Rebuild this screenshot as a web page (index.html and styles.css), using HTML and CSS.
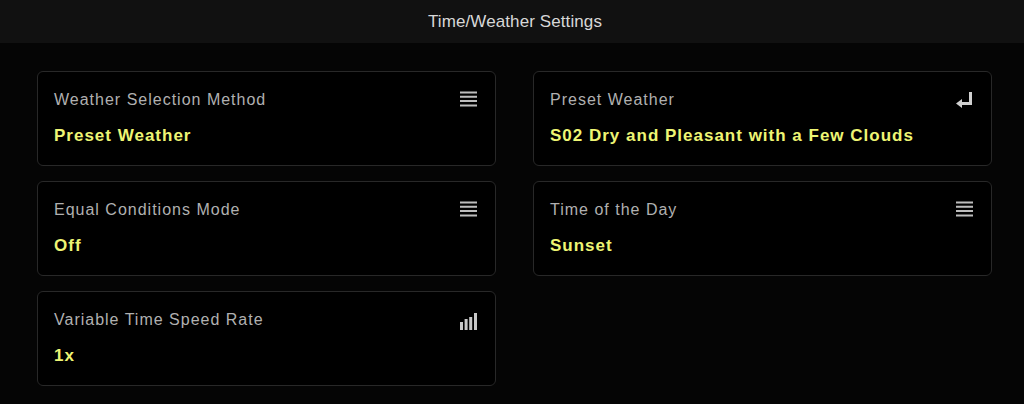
FILE: index.html
```html
<!DOCTYPE html>
<html lang="en">
<head>
  <meta charset="UTF-8" />
  <title>Time/Weather Settings</title>
  <link rel="stylesheet" href="styles.css">
</head>
<body>
  <header>
    <h1>Time/Weather Settings</h1>
  </header>

  <main class="grid">
    <div class="card">
      <div class="top">
        <p class="label">Weather Selection Method</p>
        <svg class="icon" width="17" height="16" viewBox="0 0 17 16"><path d="M0 1.5h17M0 5.8h17M0 10.1h17M0 14.4h17" stroke="#bdbdbd" stroke-width="2"/></svg>
      </div>
      <p class="value">Preset Weather</p>
    </div>

    <div class="card">
      <div class="top">
        <p class="label">Preset Weather</p>
        <svg class="icon" width="17" height="17" viewBox="0 0 17 17"><path d="M14.5 1v11.5H5" fill="none" stroke="#d0d0d0" stroke-width="3"/><path d="M0 12.5l6-4.5v9z" fill="#d0d0d0"/></svg>
      </div>
      <p class="value">S02 Dry and Pleasant with a Few Clouds</p>
    </div>

    <div class="card">
      <div class="top">
        <p class="label">Equal Conditions Mode</p>
        <svg class="icon" width="17" height="16" viewBox="0 0 17 16"><path d="M0 1.5h17M0 5.8h17M0 10.1h17M0 14.4h17" stroke="#bdbdbd" stroke-width="2"/></svg>
      </div>
      <p class="value">Off</p>
    </div>

    <div class="card">
      <div class="top">
        <p class="label">Time of the Day</p>
        <svg class="icon" width="17" height="16" viewBox="0 0 17 16"><path d="M0 1.5h17M0 5.8h17M0 10.1h17M0 14.4h17" stroke="#bdbdbd" stroke-width="2"/></svg>
      </div>
      <p class="value">Sunset</p>
    </div>

    <div class="card">
      <div class="top">
        <p class="label">Variable Time Speed Rate</p>
        <svg class="icon bars" width="17" height="17" viewBox="0 0 17 17"><path d="M0 9h3v8H0zM4.6 6h3v11h-3zM9.2 4h3v13h-3zM14 0h3v17h-3z" fill="#c8c8c8"/></svg>
      </div>
      <p class="value">1x</p>
    </div>
  </main>
</body>
</html>
```

FILE: styles.css
```css
body {
  margin: 0;
  background-color: #050505;
  font-family: "Liberation Sans", Arial, sans-serif;
  height: 404px;
  overflow: hidden;
}

header {
  height: 43px;
  background-color: #111111;
  display: flex;
  align-items: center;
  justify-content: center;
  padding-left: 6px;
}

h1 {
  margin: 0;
  font-weight: normal;
  font-size: 17px;
  letter-spacing: 0.1px;
  color: #d8d8d8;
}

.grid {
  display: grid;
  grid-template-columns: 459px 459px;
  column-gap: 37px;
  row-gap: 15px;
  padding: 28px 0 0 37px;
}

.card {
  height: 95px;
  box-sizing: border-box;
  border: 1px solid #282828;
  border-radius: 6px;
  background-color: #000;
  padding: 19px 18px 0 16px;
}

.top {
  display: flex;
  justify-content: space-between;
  align-items: flex-start;
  height: 18px;
}

.bars {
  margin-top: 2px;
}

.label {
  margin: 0;
  font-size: 16px;
  line-height: 18px;
  letter-spacing: 1px;
  color: #b0b0b0;
}

.value {
  margin: 17px 0 0 0;
  font-size: 17px;
  line-height: 20px;
  font-weight: bold;
  letter-spacing: 1px;
  color: #eef574;
}
```
